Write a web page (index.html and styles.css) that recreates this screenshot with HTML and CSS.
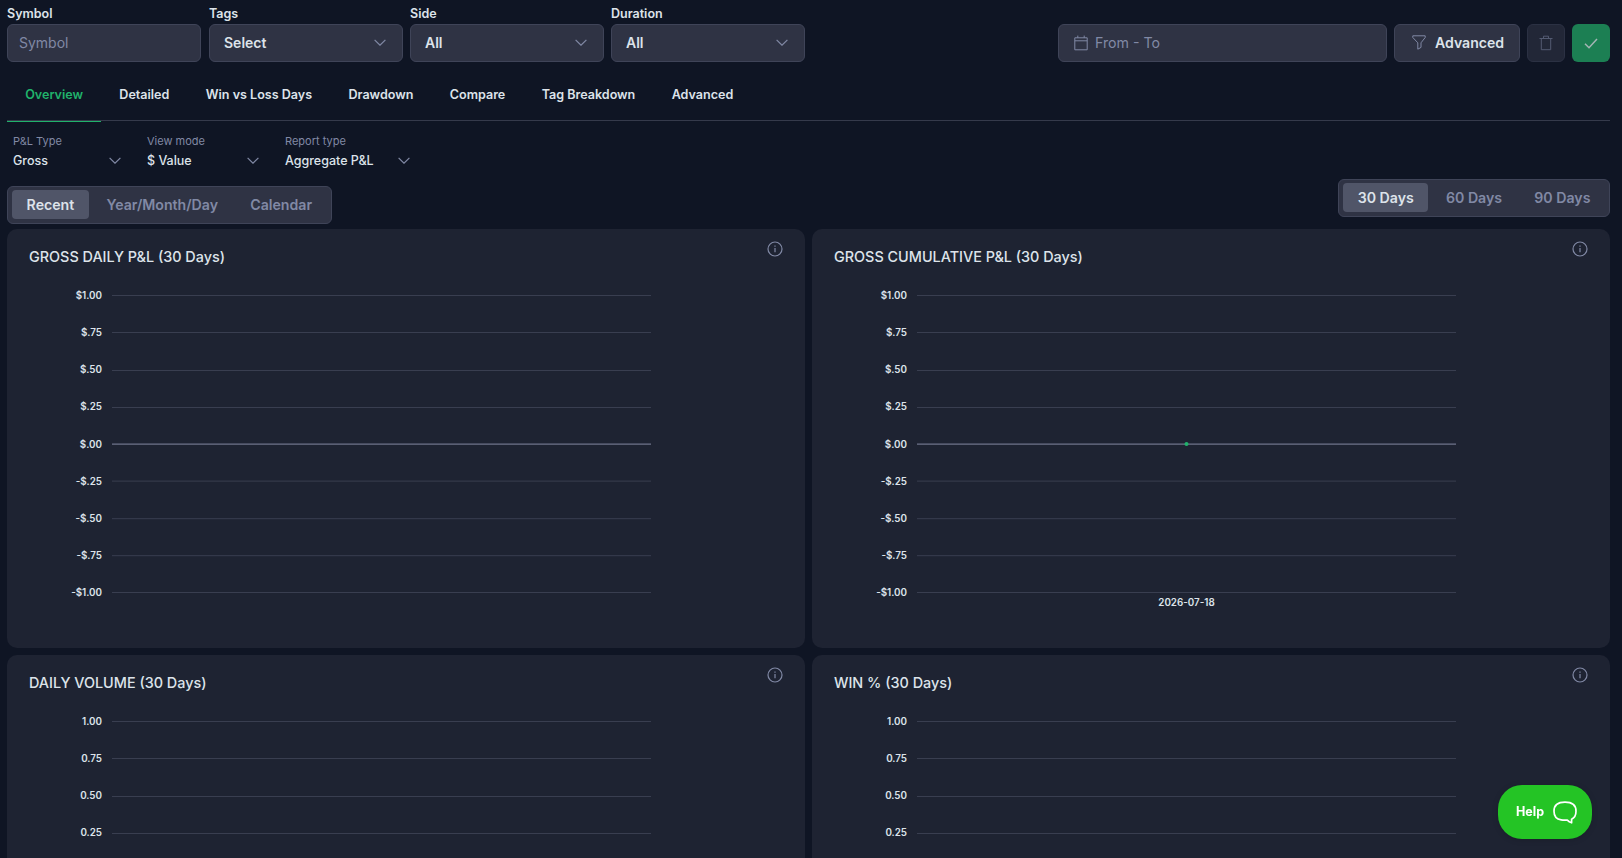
FILE: index.html
```
<!DOCTYPE html>
<html lang="en">
<head>
  <meta charset="UTF-8" />
  <meta name="viewport" content="width=device-width, initial-scale=1.0" />
  <title>Reports - Overview</title>
  <link rel="stylesheet" href="styles.css">
</head>
<body>
  <!-- shared icons -->
  <svg class="sprite" aria-hidden="true">
    <symbol id="chevron" viewBox="0 0 12 7"><path d="M.6.8 6 6.2 11.4.8" /></symbol>
    <symbol id="info" viewBox="0 0 16 16"><circle cx="8" cy="8" r="7" /><path d="M8 7v4.3M8 4.5v1.2" /></symbol>
  </svg>

  <form class="filters">
    <div class="field">
      <label for="symbol">Symbol</label>
      <input type="text" id="symbol" class="control" placeholder="Symbol">
    </div>
    <div class="field">
      <label>Tags</label>
      <div class="control select"><span>Select</span><svg class="chevron"><use href="#chevron" /></svg></div>
    </div>
    <div class="field">
      <label>Side</label>
      <div class="control select"><span>All</span><svg class="chevron"><use href="#chevron" /></svg></div>
    </div>
    <div class="field">
      <label>Duration</label>
      <div class="control select"><span>All</span><svg class="chevron"><use href="#chevron" /></svg></div>
    </div>

    <div class="filter-actions">
      <div class="control date-range">
        <svg class="icon" width="14" height="16" viewBox="0 0 14 16"><path d="M.8 2.8h12.4v12H.8zM.8 5.8h12.4M3.8.6v2.2M10.2.6v2.2" /></svg>
        <span>From - To</span>
      </div>
      <button type="button" class="control btn-advanced">
        <svg class="icon" width="14" height="15" viewBox="0 0 14 15"><path d="M.8.8h12.4v1.7L9 7.8v4.6l-3.2 1.8V7.8L.8 2.5z" /></svg>
        Advanced
      </button>
      <button type="button" class="control btn-icon btn-clear" aria-label="Clear">
        <svg class="icon" width="14" height="16" viewBox="0 0 14 16"><path d="M.5 3.5h13M2.3 3.5v11.2h9.4V3.5M4.5 3.3V1.2h5v2.1" /></svg>
      </button>
      <button type="button" class="btn-icon btn-apply" aria-label="Apply">
        <svg class="icon" width="14" height="11" viewBox="0 0 14 11"><path d="M1 5.8 5 9.7 13 1" /></svg>
      </button>
    </div>
  </form>

  <nav class="tabs">
    <a class="tab active">Overview</a>
    <a class="tab">Detailed</a>
    <a class="tab">Win vs Loss Days</a>
    <a class="tab">Drawdown</a>
    <a class="tab">Compare</a>
    <a class="tab">Tag Breakdown</a>
    <a class="tab">Advanced</a>
  </nav>

  <div class="toolbar">
    <div>
      <div class="options">
        <div class="option option-pl">
          <small>P&amp;L Type</small>
          <div class="option-value">Gross <svg class="chevron"><use href="#chevron" /></svg></div>
        </div>
        <div class="option option-view">
          <small>View mode</small>
          <div class="option-value">$ Value <svg class="chevron"><use href="#chevron" /></svg></div>
        </div>
        <div class="option option-report">
          <small>Report type</small>
          <div class="option-value">Aggregate P&amp;L <svg class="chevron"><use href="#chevron" /></svg></div>
        </div>
      </div>
      <div class="segmented">
        <button class="active">Recent</button>
        <button>Year/Month/Day</button>
        <button>Calendar</button>
      </div>
    </div>
    <div class="segmented days">
      <button class="active">30 Days</button>
      <button>60 Days</button>
      <button>90 Days</button>
    </div>
  </div>

  <main class="cards">
    <section class="card">
      <header><h3>GROSS DAILY P&amp;L (30 Days)</h3><svg class="info"><use href="#info" /></svg></header>
      <svg class="chart" viewBox="0 0 644 340">
        <g class="grid">
          <path d="M83 17.5h539M83 54.5h539M83 92.5h539M83 129.5h539M83 203.1h539M83 240.7h539M83 277.7h539M83 314.5h539" />
          <path class="zero" d="M83 166.2h539" />
        </g>
        <g class="y-axis">
          <text x="73" y="21">$1.00</text>
          <text x="73" y="58">$.75</text>
          <text x="73" y="95">$.50</text>
          <text x="73" y="132">$.25</text>
          <text x="73" y="170">$.00</text>
          <text x="73" y="207">-$.25</text>
          <text x="73" y="244">-$.50</text>
          <text x="73" y="281">-$.75</text>
          <text x="73" y="318">-$1.00</text>
        </g>
      </svg>
    </section>

    <section class="card">
      <header><h3>GROSS CUMULATIVE P&amp;L (30 Days)</h3><svg class="info"><use href="#info" /></svg></header>
      <svg class="chart" viewBox="0 0 644 340">
        <g class="grid">
          <path d="M83 17.5h539M83 54.5h539M83 92.5h539M83 129.5h539M83 203.1h539M83 240.7h539M83 277.7h539M83 314.5h539" />
          <path class="zero" d="M83 166.2h539" />
        </g>
        <circle class="point" cx="352.5" cy="166" r="2" />
        <g class="y-axis">
          <text x="73" y="21">$1.00</text>
          <text x="73" y="58">$.75</text>
          <text x="73" y="95">$.50</text>
          <text x="73" y="132">$.25</text>
          <text x="73" y="170">$.00</text>
          <text x="73" y="207">-$.25</text>
          <text x="73" y="244">-$.50</text>
          <text x="73" y="281">-$.75</text>
          <text x="73" y="318">-$1.00</text>
        </g>
        <text class="x-label" x="352.5" y="328">2026-07-18</text>
      </svg>
    </section>

    <section class="card">
      <header><h3>DAILY VOLUME (30 Days)</h3><svg class="info"><use href="#info" /></svg></header>
      <svg class="chart" viewBox="0 0 644 340">
        <g class="grid">
          <path d="M83 17.5h539M83 54.5h539M83 92.5h539M83 129.5h539" />
        </g>
        <g class="y-axis">
          <text x="73" y="21">1.00</text>
          <text x="73" y="58">0.75</text>
          <text x="73" y="95">0.50</text>
          <text x="73" y="132">0.25</text>
        </g>
      </svg>
    </section>

    <section class="card">
      <header><h3>WIN % (30 Days)</h3><svg class="info"><use href="#info" /></svg></header>
      <svg class="chart" viewBox="0 0 644 340">
        <g class="grid">
          <path d="M83 17.5h539M83 54.5h539M83 92.5h539M83 129.5h539" />
        </g>
        <g class="y-axis">
          <text x="73" y="21">1.00</text>
          <text x="73" y="58">0.75</text>
          <text x="73" y="95">0.50</text>
          <text x="73" y="132">0.25</text>
        </g>
      </svg>
    </section>
  </main>

  <button class="help-btn">
    <span>Help</span>
    <svg width="24" height="23" viewBox="0 0 24 23"><path d="M18.6 18.2v3.6c-1.700-.5-3.200-1.500-4.300-2.700-1.500.1-3.900.2-6.100-.2C3.600 18.200 1 15.200 1 10.200 1 4.200 4.200 1.200 12 1.200s11 3 11 9c0 3.700-1.500 6.600-4.400 8z" /></svg>
  </button>
</body>
</html>
```

FILE: styles.css
```
:root {
  --bg: #0f1524;
  --card: #1e2332;
  --control: #2f3344;
  --control-active: #505568;
  --border: #3f4458;
  --text: #dde3ea;
  --muted: #8189a5;
  --green: #20b26b;
}
* {
  box-sizing: border-box;
}
body {
  margin: 0;
  padding: 6px 12px 0 7px;
  height: 858px;
  overflow: hidden;
  background: var(--bg);
  color: var(--text);
  font-family: Inter, "Liberation Sans", sans-serif;
  font-size: 14px;
}
button, input {
  font: inherit;
  color: inherit;
  margin: 0;
}
.sprite {
  display: none;
}
svg {
  fill: none;
  stroke: var(--muted);
  flex-shrink: 0;
}
.chevron {
  width: 12px;
  height: 7px;
  stroke-width: 1.2;
}

/* filters */
.filters {
  display: flex;
  align-items: flex-end;
  gap: 7px;
  height: 56px;
}
.field {
  width: 194px;
}
.field:first-child {
  margin-right: 1px;
}
.field label {
  display: block;
  height: 18px;
  line-height: 15px;
  font-size: 12.5px;
  font-weight: 600;
}
.control {
  display: flex;
  align-items: center;
  width: 100%;
  height: 38px;
  padding-bottom: 1px;
  background: var(--control);
  border: 1px solid var(--border);
  border-radius: 6px;
}
input.control {
  padding: 0 11px 2px;
  outline: none;
}
input::placeholder {
  color: var(--muted);
}
.select {
  justify-content: space-between;
  padding: 0 16px 1px 14px;
  font-weight: 600;
}
.filter-actions {
  display: flex;
  gap: 7px;
  margin-left: auto;
}
.date-range {
  width: 329px;
  padding: 0 15px 1px;
  gap: 7px;
  font-size: 14.2px;
  color: var(--muted);
}
.btn-advanced {
  width: 126px;
  padding: 0 17px 1px;
  gap: 9px;
  font-size: 14.1px;
  font-weight: 600;
}
.btn-icon {
  display: flex;
  align-items: center;
  justify-content: center;
  width: 38px;
  height: 38px;
  padding: 0;
  border-radius: 6px;
}
.btn-clear {
  opacity: 0.6;
}
.btn-apply {
  background: #1c7f53;
  border: none;
}
.btn-apply svg {
  stroke: #a5b5b5;
  stroke-width: 1.5;
}

/* tabs */
.tabs {
  display: flex;
  height: 59px;
  border-bottom: 1px solid #353a4b;
}
.tab {
  height: 60px;
  padding: 0 18.2px;
  line-height: 66px;
  font-size: 12.55px;
  font-weight: 600;
}
.tab.active {
  color: var(--green);
  border-bottom: 1px solid var(--green);
}

/* toolbar */
.toolbar {
  display: flex;
  justify-content: space-between;
  align-items: flex-end;
  height: 103px;
}
.options {
  display: flex;
  padding-left: 6px;
}
.option {
  height: 52px;
}
.option small {
  display: block;
  height: 17px;
  line-height: 15px;
  font-size: 11px;
  color: var(--muted);
}
.option-value {
  display: flex;
  align-items: center;
  justify-content: space-between;
  height: 18px;
  font-size: 12.5px;
  font-weight: 500;
}
.option-pl {
  width: 108px;
  margin-right: 26px;
}
.option-view {
  width: 112px;
  margin-right: 26px;
}
.option-report {
  width: 125px;
}
.segmented {
  display: inline-flex;
  height: 38px;
  padding: 3px 4px 4px;
  background: var(--control);
  border: 1px solid var(--border);
  border-radius: 6px;
}
.segmented button {
  height: 29px;
  padding: 0 14.6px;
  background: none;
  border: none;
  border-radius: 4px;
  color: var(--muted);
  font-size: 14.15px;
  font-weight: 600;
}
.segmented button + button {
  margin-left: 3px;
}
.segmented .active {
  background: var(--control-active);
  color: var(--text);
}
.toolbar > div:first-child .segmented {
  vertical-align: bottom;
}
.days {
  margin-bottom: 7px;
}

/* chart cards */
.cards {
  display: grid;
  grid-template-columns: 798px 798px;
  gap: 7px;
  margin-top: 5px;
}
.card {
  height: 419px;
  padding: 12px 22px 0;
  background: var(--card);
  border-radius: 10px;
}
.card header {
  display: flex;
  justify-content: space-between;
  height: 37px;
}
.card h3 {
  margin: 7px 0 0;
  line-height: 18px;
  font-size: 14.4px;
  font-weight: 500;
}
.info {
  width: 16px;
  height: 16px;
  margin-right: 0.5px;
  stroke-width: 1.2;
}
.chart {
  display: block;
  width: 644px;
  height: 340px;
}
.grid path {
  stroke: #393e50;
}
.grid .zero {
  stroke: #6f758b;
  stroke-width: 1.2;
}
.point {
  fill: var(--green);
  stroke: none;
}
.chart text {
  fill: var(--text);
  stroke: none;
  font-size: 9.8px;
  font-weight: 600;
}
.y-axis {
  text-anchor: end;
}
.x-label {
  text-anchor: middle;
}

/* help launcher */
.help-btn {
  position: fixed;
  right: 30px;
  bottom: 19px;
  display: flex;
  align-items: center;
  gap: 9px;
  width: 94px;
  height: 54px;
  padding: 0 16px 0 18px;
  background: #24c425;
  border: none;
  border-radius: 24px;
  box-shadow: 0 1px 6px rgba(0,0,0,0.15);
  color: #fff;
  font-size: 12.5px;
  font-weight: 700;
}
.help-btn span {
  padding-bottom: 1px;
}
.help-btn svg {
  stroke: #fff;
  stroke-width: 1.7;
  stroke-linejoin: round;
}
```
